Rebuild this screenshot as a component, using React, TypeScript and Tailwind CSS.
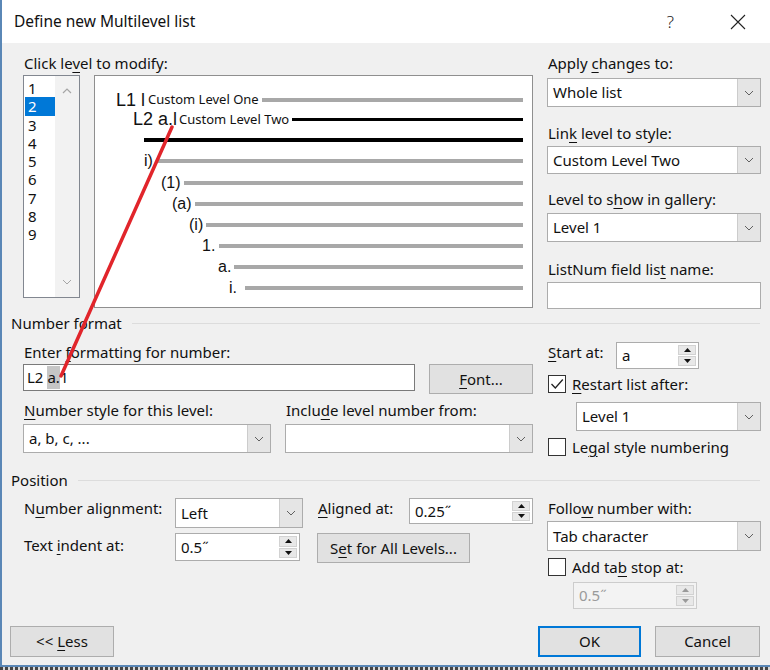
import React from "react";

function Acc({ t, i }: { t: string; i: number }) {
  return (
    <>
      {t.slice(0, i)}
      <span className="underline underline-offset-[3px] decoration-1">{t[i]}</span>
      {t.slice(i + 1)}
    </>
  );
}

function Chevron({ color = "#606060" }: { color?: string }) {
  return (
    <svg width="10" height="6" viewBox="0 0 10 6">
      <path d="M1 1l4 4 4-4" fill="none" stroke={color} strokeWidth="1" />
    </svg>
  );
}

function Select({ value, className }: { value: string; className: string }) {
  return (
    <div className={`flex bg-white border border-[#acacac] ${className}`}>
      <div className="flex-1 flex items-center pl-[5px] whitespace-nowrap overflow-hidden">{value}</div>
      <div className="w-[23px] flex items-center justify-center bg-[#e5e5e5] border-l border-[#cccccc]">
        <Chevron />
      </div>
    </div>
  );
}

function Tri({ up, color }: { up?: boolean; color: string }) {
  return (
    <svg width="7" height="4" viewBox="0 0 7 4">
      <path d={up ? "M0 4L3.5 0L7 4Z" : "M0 0L3.5 4L7 0Z"} fill={color} />
    </svg>
  );
}

function Spin({ value, className, disabled }: { value: string; className: string; disabled?: boolean }) {
  const c = disabled ? "#9a9a9a" : "#111111";
  return (
    <div
      className={`flex border ${disabled ? "bg-[#f3f3f3] border-[#cccccc] text-[#9a9a9a]" : "bg-white border-[#acacac]"} ${className}`}
    >
      <div className="flex-1 flex items-center pl-[5px]">{value}</div>
      <div className="w-[18px] my-[2px] mr-[2px] flex flex-col gap-px">
        <div className="flex-1 flex items-center justify-center bg-[#e8e8e8] border border-[#d2d2d2]">
          <Tri up color={c} />
        </div>
        <div className="flex-1 flex items-center justify-center bg-[#e8e8e8] border border-[#d2d2d2]">
          <Tri color={c} />
        </div>
      </div>
    </div>
  );
}

function Check({ on }: { on?: boolean }) {
  return (
    <div className="w-[18px] h-[18px] shrink-0 border border-[#333333] bg-white flex items-center justify-center">
      {on && (
        <svg width="14" height="12" viewBox="0 0 14 12">
          <path d="M1.5 6l3.8 4L12.8 1.5" fill="none" stroke="#222222" strokeWidth="1.3" />
        </svg>
      )}
    </div>
  );
}

function Btn({ children, className }: { children: React.ReactNode; className: string }) {
  return (
    <div className={`flex items-center justify-center bg-[#e1e1e1] ${className}`}>{children}</div>
  );
}

function Header({ title, className }: { title: string; className: string }) {
  return (
    <div className={`flex items-center h-[16px] pl-[9px] pr-[10px] ${className}`}>
      <span className="leading-[16px]">{title}</span>
      <div className="flex-1 h-px bg-[#dcdcdc] ml-[10px]" />
    </div>
  );
}

export default function App() {
  const levels = ["1", "2", "3", "4", "5", "6", "7", "8", "9"];

  return (
    <div className="w-[770px] h-[670px] overflow-hidden bg-[#cfcfcf] font-['Noto_Sans','Liberation_Sans',sans-serif] text-[15px] text-[#111111]">
      <div className="relative h-[667px] bg-[#f0f0f0] border-l-2 border-b-2 border-[#5a87b6]">
        {/* title bar */}
        <div className="h-[43px] bg-white flex items-center pl-[12px] pr-[24px]">
          <span className="text-[15.5px]">Define new Multilevel list</span>
          <span className="ml-auto text-[17px] font-light text-[#222222] mr-[56px]">?</span>
          <svg width="16" height="16" viewBox="0 0 16 16">
            <path d="M1 1L15 15M15 1L1 15" stroke="#222222" strokeWidth="1.1" />
          </svg>
        </div>

        {/* level list + preview + right column */}
        <div className="flex h-[267px] pl-[21px] pt-[12px]">
          <div className="w-[510px] flex flex-col">
            <div className="h-[16px] leading-[16px] pl-px">
              <Acc t="Click level to modify:" i={8} />
            </div>
            <div className="mt-[4px] flex gap-[14px] items-start">
              <div className="w-[57px] h-[223px] flex bg-white border border-[#828790]">
                <div className="w-[31px] flex flex-col pt-[3px]">
                  {levels.map((n) => (
                    <div
                      key={n}
                      className={`h-[18.3px] leading-[18.3px] ml-px pl-[3px] ${n === "2" ? "bg-[#0078d7] text-white" : ""}`}
                    >
                      {n}
                    </div>
                  ))}
                </div>
                <div className="flex-1 bg-[#f2f2f2] flex flex-col items-center justify-between py-[12px]">
                  <svg width="10" height="6" viewBox="0 0 10 6">
                    <path d="M1 5l4-4 4 4" fill="none" stroke="#a6a6a6" strokeWidth="1.2" />
                  </svg>
                  <Chevron color="#a6a6a6" />
                </div>
              </div>

              <div className="w-[439px] h-[233px] bg-white border border-[#8f8f8f] flex flex-col pt-[14px] pr-[9px] font-['Liberation_Sans',sans-serif]">
                <div className="h-[20px] flex items-center pl-[21px]">
                  <span className="text-[18px]">L1 l</span>
                  <span className="text-[13px] ml-[3px] font-['Noto_Sans',sans-serif]">Custom Level One</span>
                  <div className="flex-1 h-[4px] bg-[#a8a8a8] ml-[3px]" />
                </div>
                <div className="h-[19px] flex items-center pl-[38px]">
                  <span className="text-[18px]">L2 a.l</span>
                  <span className="text-[13px] ml-[2px] font-['Noto_Sans',sans-serif]">Custom Level Two</span>
                  <div className="flex-1 h-[3px] bg-black ml-[3px]" />
                </div>
                <div className="h-[21px] flex items-center pl-[49px]">
                  <div className="flex-1 h-[4px] bg-black" />
                </div>
                <div className="h-[22px] flex items-center pl-[49px]">
                  <span className="text-[16px]">i)</span>
                  <div className="flex-1 h-[4px] bg-[#a8a8a8] ml-[4px]" />
                </div>
                <div className="h-[21px] flex items-center pl-[66px]">
                  <span className="text-[16px]">(1)</span>
                  <div className="flex-1 h-[4px] bg-[#a8a8a8] ml-[3px]" />
                </div>
                <div className="h-[21px] flex items-center pl-[77px]">
                  <span className="text-[16px]">(a)</span>
                  <div className="flex-1 h-[4px] bg-[#a8a8a8] ml-[3px]" />
                </div>
                <div className="h-[21px] flex items-center pl-[94px]">
                  <span className="text-[16px]">(i)</span>
                  <div className="flex-1 h-[4px] bg-[#a8a8a8] ml-[3px]" />
                </div>
                <div className="h-[21px] flex items-center pl-[107px]">
                  <span className="text-[16px]">1.</span>
                  <div className="flex-1 h-[4px] bg-[#a8a8a8] ml-[4px]" />
                </div>
                <div className="h-[21px] flex items-center pl-[123px]">
                  <span className="text-[16px]">a.</span>
                  <div className="flex-1 h-[4px] bg-[#a8a8a8] ml-[3px]" />
                </div>
                <div className="h-[21px] flex items-center pl-[134px]">
                  <span className="text-[16px]">i.</span>
                  <div className="flex-1 h-[4px] bg-[#a8a8a8] ml-[8px]" />
                </div>
              </div>
            </div>
          </div>

          <div className="ml-[14px] w-[214px] flex flex-col">
            <div className="h-[16px] leading-[16px] pl-px">
              <Acc t="Apply changes to:" i={6} />
            </div>
            <Select value="Whole list" className="mt-[7px] h-[29px]" />
            <div className="mt-[18px] h-[16px] leading-[16px] pl-px">
              <Acc t="Link level to style:" i={3} />
            </div>
            <Select value="Custom Level Two" className="mt-[5px] h-[28px]" />
            <div className="mt-[17px] h-[16px] leading-[16px] pl-px">
              <Acc t="Level to show in gallery:" i={10} />
            </div>
            <Select value="Level 1" className="mt-[6px] h-[29px]" />
            <div className="mt-[19px] h-[16px] leading-[16px] pl-px">
              <Acc t="ListNum field list name:" i={17} />
            </div>
            <div className="mt-[5px] h-[27px] bg-white border border-[#acacac]" />
          </div>
        </div>

        {/* Number format */}
        <Header title="Number format" className="mt-[5px]" />
        <div className="flex h-[130px] pl-[21px]">
          <div className="w-[510px] flex flex-col">
            <div className="mt-[13px] h-[16px] leading-[16px] pl-px">
              <Acc t="Enter formatting for number:" i={6} />
            </div>
            <div className="mt-[4px] flex items-start">
              <div className="w-[392px] h-[27px] bg-white border border-[#7a7a7a] flex items-center pl-[3px]">
                L2 <span className="ml-[4px] bg-[#c6c6c6]">a.</span>1
              </div>
              <Btn className="ml-[14px] w-[104px] h-[30px] border border-[#adadad]">
                <Acc t="Font..." i={0} />
              </Btn>
            </div>
            <div className="mt-[8px] flex gap-[14px]">
              <div className="w-[248px] h-[16px] leading-[16px] pl-px">
                <Acc t="Number style for this level:" i={0} />
              </div>
              <div className="w-[248px] h-[16px] leading-[16px] pl-px">
                <Acc t="Include level number from:" i={5} />
              </div>
            </div>
            <div className="mt-[6px] flex gap-[14px]">
              <Select value="a, b, c, ..." className="w-[248px] h-[29px]" />
              <Select value="" className="w-[248px] h-[29px]" />
            </div>
          </div>

          <div className="ml-[14px] w-[214px] flex flex-col">
            <div className="mt-[11px] flex items-start">
              <div className="w-[69px] mt-[2px] h-[16px] leading-[16px] pl-px">
                <Acc t="Start at:" i={0} />
              </div>
              <Spin value="a" className="w-[83px] h-[27px]" />
            </div>
            <div className="mt-[6px] flex items-center pl-px gap-[6px] h-[18px]">
              <Check on />
              <span>
                <Acc t="Restart list after:" i={0} />
              </span>
            </div>
            <Select value="Level 1" className="mt-[9px] ml-[29px] w-[185px] h-[29px]" />
            <div className="mt-[7px] flex items-center pl-px gap-[6px] h-[18px]">
              <Check />
              <span>
                <Acc t="Legal style numbering" i={2} />
              </span>
            </div>
          </div>
        </div>

        {/* Position */}
        <Header title="Position" className="mt-[11px]" />
        <div className="flex h-[138px] pl-[21px]">
          <div className="w-[510px] flex flex-col">
            <div className="mt-[10px] flex items-start">
              <div className="w-[152px] mt-[2px] h-[16px] leading-[16px] pl-px">
                <Acc t="Number alignment:" i={1} />
              </div>
              <Select value="Left" className="w-[128px] h-[30px]" />
              <div className="ml-[15px] w-[91px] mt-[2px] h-[16px] leading-[16px]">
                <Acc t="Aligned at:" i={0} />
              </div>
              <Spin value={"0.25\u02dd"} className="w-[124px] h-[26px]" />
            </div>
            <div className="mt-[5px] flex items-start">
              <div className="w-[152px] mt-[4px] h-[16px] leading-[16px] pl-px">
                <Acc t="Text indent at:" i={5} />
              </div>
              <Spin value={"0.5\u02dd"} className="w-[125px] h-[28px]" />
              <Btn className="ml-[17px] w-[153px] h-[30px] border border-[#adadad]">
                <Acc t="Set for All Levels..." i={1} />
              </Btn>
            </div>
          </div>

          <div className="ml-[14px] w-[214px] flex flex-col">
            <div className="mt-[12px] h-[16px] leading-[16px] pl-px">
              <Acc t="Follow number with:" i={5} />
            </div>
            <Select value="Tab character" className="mt-[5px] h-[30px]" />
            <div className="mt-[7px] flex items-center pl-px gap-[6px] h-[18px]">
              <Check />
              <span>
                <Acc t="Add tab stop at:" i={6} />
              </span>
            </div>
            <Spin value={"0.5\u02dd"} disabled className="mt-[6px] ml-[26px] w-[124px] h-[27px]" />
          </div>
        </div>

        {/* footer buttons */}
        <div className="flex h-[31px] pl-[8px] pr-[10px]">
          <Btn className="w-[104px] border border-[#adadad]">
            {"<< "}
            <span className="ml-[4px]">
              <Acc t="Less" i={0} />
            </span>
          </Btn>
          <Btn className="ml-auto w-[103px] border-2 border-[#0078d7]">OK</Btn>
          <Btn className="ml-[14px] w-[105px] border border-[#adadad]">Cancel</Btn>
        </div>

        {/* red annotation arrow */}
        <svg className="absolute left-[-2px] top-0 pointer-events-none" width="770" height="670" viewBox="0 0 770 670">
          <line x1="172" y1="127" x2="61" y2="376" stroke="#e1252b" strokeWidth="3.5" strokeLinecap="round" />
        </svg>
      </div>
      <div className="h-[3px] bg-[repeating-linear-gradient(90deg,#444_0px,#444_3px,#d8d8d8_3px,#d8d8d8_5px)]" />
    </div>
  );
}
